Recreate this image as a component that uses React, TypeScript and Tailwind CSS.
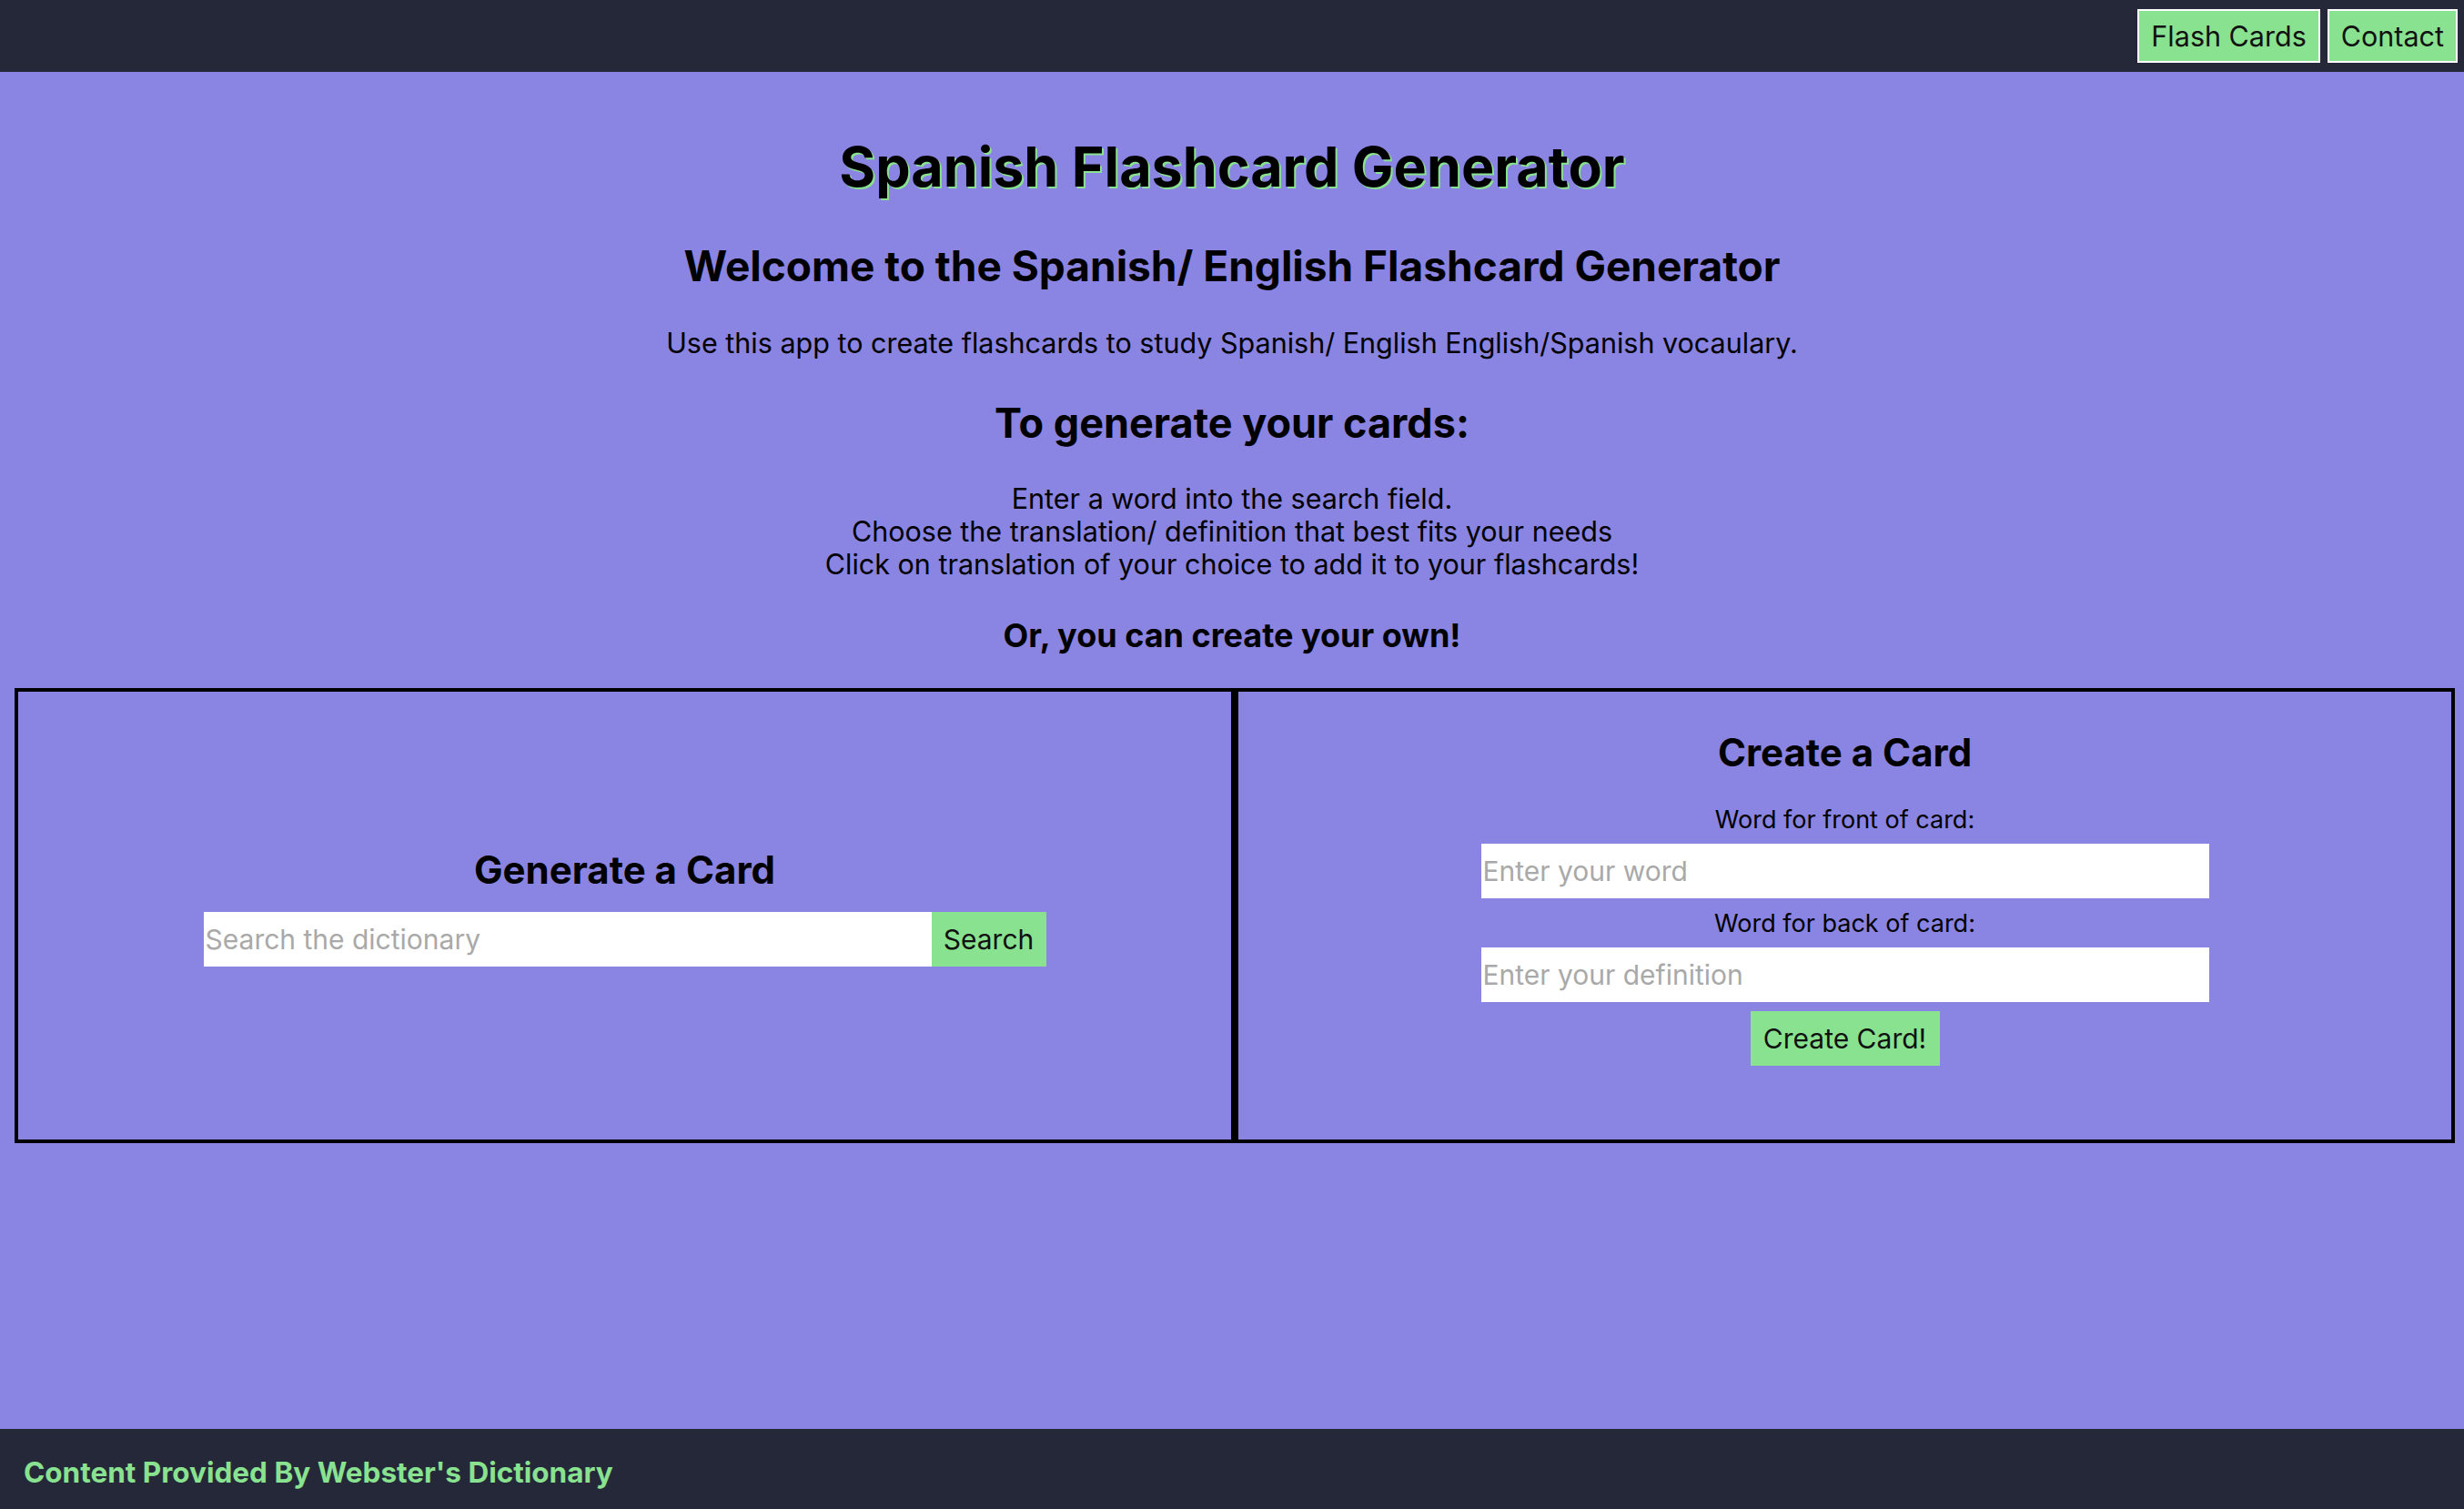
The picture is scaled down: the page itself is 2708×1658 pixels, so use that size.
import React from "react";

const font = { fontFamily: "Inter, 'Noto Sans', sans-serif" };

function NavButton({ label }: { label: string }) {
  return (
    <a
      href="#"
      className="h-[59px] flex items-center px-[13px] bg-[#89e28f] border-2 border-white text-[30.5px] leading-[40px] text-[#111111]"
    >
      {label}
    </a>
  );
}

function GenerateCard() {
  return (
    <div className="flex-1 border-4 border-black flex flex-col items-center pt-[171px]">
      <h2 className="text-[42px] leading-[50px] font-bold">Generate a Card</h2>
      <form className="mt-[21px] flex" onSubmit={(e) => e.preventDefault()}>
        <input
          type="text"
          placeholder="Search the dictionary"
          className="w-[800px] h-[60px] bg-white px-[2px] text-[30px] placeholder:text-[#a9a9a9] outline-none"
        />
        <button className="h-[60px] w-[126px] bg-[#89e28f] text-[30px] text-[#111111]">Search</button>
      </form>
    </div>
  );
}

function CreateCard() {
  return (
    <div className="flex-1 border-4 border-black flex flex-col items-center pt-[42px]">
      <h2 className="text-[42px] leading-[50px] font-bold">Create a Card</h2>
      <label className="mt-[33px] text-[27px] leading-[32px]">Word for front of card:</label>
      <input
        type="text"
        placeholder="Enter your word"
        className="mt-[10px] w-[800px] h-[60px] bg-white px-[2px] text-[30px] placeholder:text-[#a9a9a9] outline-none"
      />
      <label className="mt-[12px] text-[27px] leading-[32px]">Word for back of card:</label>
      <input
        type="text"
        placeholder="Enter your definition"
        className="mt-[10px] w-[800px] h-[60px] bg-white px-[2px] text-[30px] placeholder:text-[#a9a9a9] outline-none"
      />
      <button className="mt-[10px] h-[60px] w-[208px] bg-[#89e28f] text-[30px] text-[#111111]">Create Card!</button>
    </div>
  );
}

export default function App() {
  return (
    <div className="h-[1658px] flex flex-col bg-[#8a84e2] text-black" style={font}>
      <header className="h-[79px] bg-[#252839] flex items-center justify-end gap-[8px] pr-[7px]">
        <NavButton label="Flash Cards" />
        <NavButton label="Contact" />
      </header>

      <main className="flex-1 flex flex-col items-center pt-[68px] text-center">
        <h1 className="text-[61px] leading-[72px] font-bold [text-shadow:2px_2px_0px_#89e28f]">
          Spanish Flashcard Generator
        </h1>
        <h2 className="mt-[46px] text-[46px] leading-[54px] font-bold">
          Welcome to the Spanish/ English Flashcard Generator
        </h2>
        <p className="mt-[40px] text-[30.5px] leading-[36px]">
          Use this app to create flashcards to study Spanish/ English English/Spanish vocaulary.
        </p>
        <h2 className="mt-[43px] text-[45px] leading-[54px] font-bold">To generate your cards:</h2>
        <div className="mt-[38px] text-[30.5px] leading-[36px]">
          <p>Enter a word into the search field.</p>
          <p>Choose the translation/ definition that best fits your needs</p>
          <p>Click on translation of your choice to add it to your flashcards!</p>
        </div>
        <h3 className="mt-[38px] text-[36px] leading-[44px] font-bold">Or, you can create your own!</h3>

        <div className="mt-[36px] w-full flex pl-[16px] pr-[10px] h-[500px]">
          <GenerateCard />
          <CreateCard />
        </div>
      </main>

      <footer className="h-[88px] bg-[#252839] pt-[28px] pl-[26px]">
        <p className="text-[31.5px] leading-[40px] font-bold text-[#89e28f]">Content Provided By Webster's Dictionary</p>
      </footer>
    </div>
  );
}
